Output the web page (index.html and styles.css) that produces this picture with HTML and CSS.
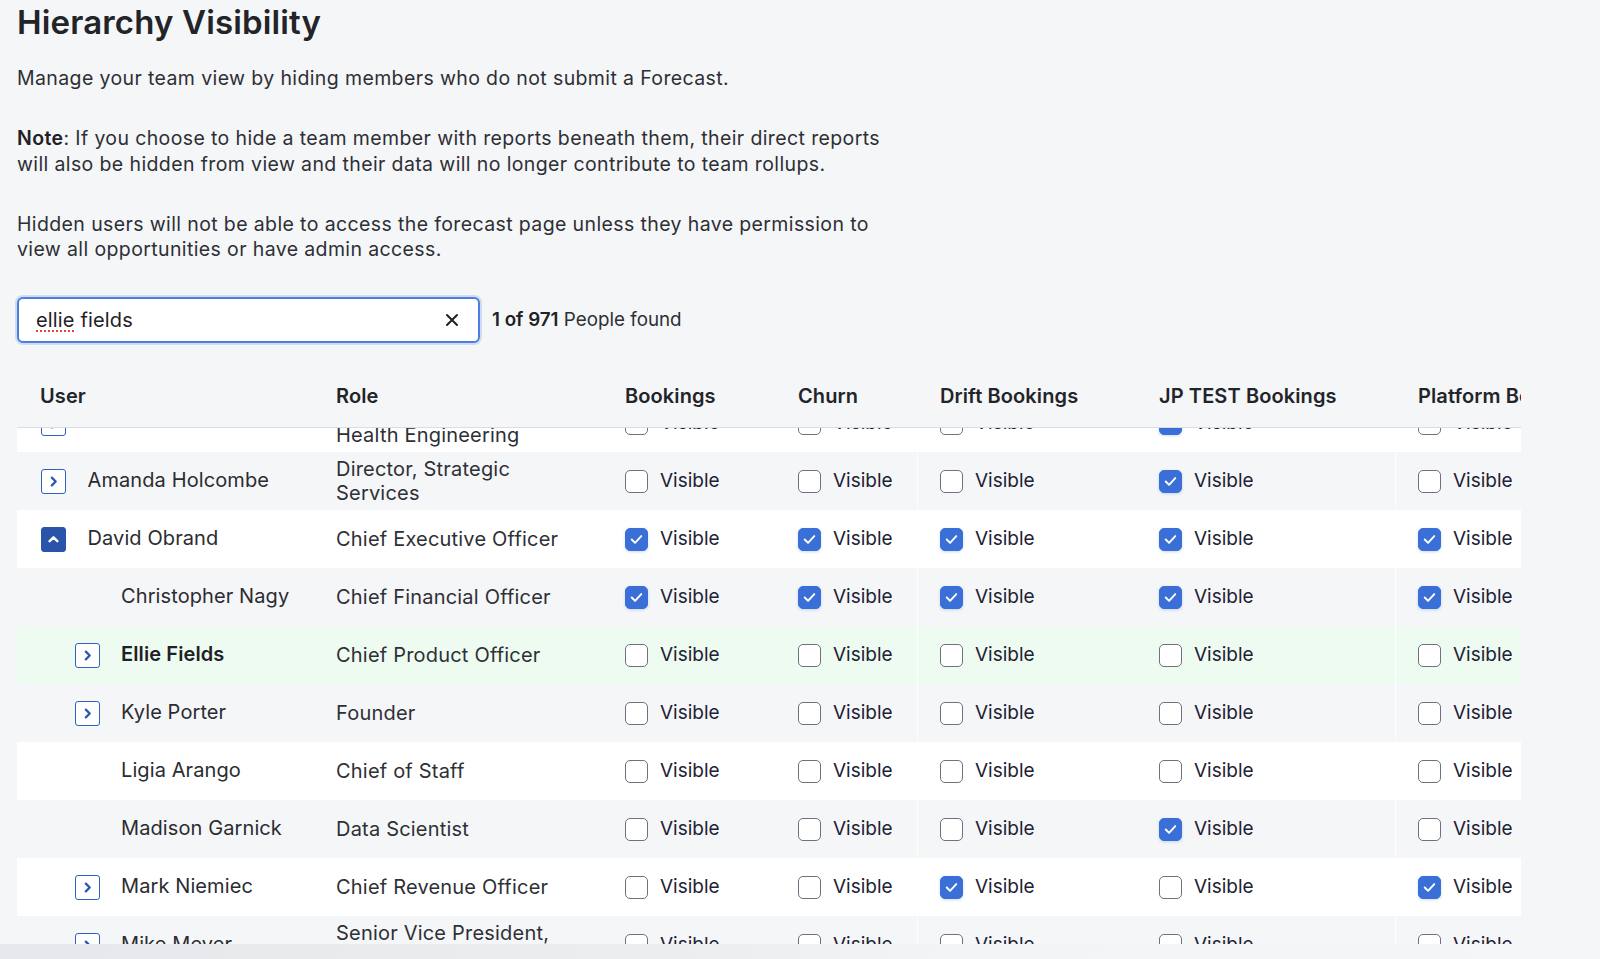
FILE: index.html
```html
<!DOCTYPE html>
<html lang="en">
<head>
<meta charset="utf-8">
<title>Hierarchy Visibility</title>
<link rel="stylesheet" href="styles.css">
</head>
<body>
<main class="page">
  <h1 class="title">Hierarchy Visibility</h1>
  <section class="intro">
    <p>Manage your team view by hiding members who do not submit a Forecast.</p>
    <p><strong>Note</strong>: If you choose to hide a team member with reports beneath them, their direct reports will also be hidden from view and their data will no longer contribute to team rollups.</p>
    <p>Hidden users will not be able to access the forecast page unless they have permission to view all opportunities or have admin access.</p>
  </section>

  <div class="search-row">
    <div class="search-box">
      <span class="search-text"><span class="misspelled">ellie</span> fields</span>
      <svg class="clear-icon" width="14" height="14" viewBox="0 0 14 14"><path d="M2 2 L12 12 M12 2 L2 12" stroke="#1f2126" stroke-width="2" stroke-linecap="round"/></svg>
    </div>
    <div class="search-count"><strong>1 of 971</strong> People found</div>
  </div>

  <div class="table">
    <div class="thead">
      <div class="th">User</div>
      <div class="th">Role</div>
      <div class="th">Bookings</div>
      <div class="th">Churn</div>
      <div class="th">Drift Bookings</div>
      <div class="th">JP TEST Bookings</div>
      <div class="th">Platform Bookings</div>
    </div>
    <div class="tbody">
      <div class="rows">
        <!-- row 0 (scrolled partly out of view) -->
        <div class="tr white">
          <div class="td user lvl0"><span class="exp"><svg viewBox="0 0 10 10"><path d="M3.5 1.5 L7 5 L3.5 8.5"/></svg></span><span class="name scrolled">Brian Hall</span></div>
          <div class="td role"><span class="role-text">Vice President, Platform Health Engineering</span></div>
          <div class="td chk"><span class="cb"></span><span class="cb-label">Visible</span></div>
          <div class="td chk"><span class="cb"></span><span class="cb-label">Visible</span></div>
          <div class="td chk div"><span class="cb"></span><span class="cb-label">Visible</span></div>
          <div class="td chk"><span class="cb on"><svg viewBox="0 0 22 22"><path d="M6 11.5 L9.5 15 L16 8"/></svg></span><span class="cb-label">Visible</span></div>
          <div class="td chk div"><span class="cb"></span><span class="cb-label">Visible</span></div>
        </div>
        <!-- Amanda -->
        <div class="tr grey">
          <div class="td user lvl0"><span class="exp"><svg viewBox="0 0 10 10"><path d="M3.5 1.5 L7 5 L3.5 8.5"/></svg></span><span class="name">Amanda Holcombe</span></div>
          <div class="td role"><span class="role-text">Director, Strategic Services</span></div>
          <div class="td chk"><span class="cb"></span><span class="cb-label">Visible</span></div>
          <div class="td chk"><span class="cb"></span><span class="cb-label">Visible</span></div>
          <div class="td chk div"><span class="cb"></span><span class="cb-label">Visible</span></div>
          <div class="td chk"><span class="cb on"><svg viewBox="0 0 22 22"><path d="M6 11.5 L9.5 15 L16 8"/></svg></span><span class="cb-label">Visible</span></div>
          <div class="td chk div"><span class="cb"></span><span class="cb-label">Visible</span></div>
        </div>
        <!-- David -->
        <div class="tr white">
          <div class="td user lvl0"><span class="exp open"><svg viewBox="0 0 10 10"><path d="M1.5 6.5 L5 3 L8.5 6.5"/></svg></span><span class="name">David Obrand</span></div>
          <div class="td role"><span class="role-text">Chief Executive Officer</span></div>
          <div class="td chk"><span class="cb on"><svg viewBox="0 0 22 22"><path d="M6 11.5 L9.5 15 L16 8"/></svg></span><span class="cb-label">Visible</span></div>
          <div class="td chk"><span class="cb on"><svg viewBox="0 0 22 22"><path d="M6 11.5 L9.5 15 L16 8"/></svg></span><span class="cb-label">Visible</span></div>
          <div class="td chk div"><span class="cb on"><svg viewBox="0 0 22 22"><path d="M6 11.5 L9.5 15 L16 8"/></svg></span><span class="cb-label">Visible</span></div>
          <div class="td chk"><span class="cb on"><svg viewBox="0 0 22 22"><path d="M6 11.5 L9.5 15 L16 8"/></svg></span><span class="cb-label">Visible</span></div>
          <div class="td chk div"><span class="cb on"><svg viewBox="0 0 22 22"><path d="M6 11.5 L9.5 15 L16 8"/></svg></span><span class="cb-label">Visible</span></div>
        </div>
        <!-- Christopher -->
        <div class="tr grey">
          <div class="td user lvl1"><span class="exp none"></span><span class="name">Christopher Nagy</span></div>
          <div class="td role"><span class="role-text">Chief Financial Officer</span></div>
          <div class="td chk"><span class="cb on"><svg viewBox="0 0 22 22"><path d="M6 11.5 L9.5 15 L16 8"/></svg></span><span class="cb-label">Visible</span></div>
          <div class="td chk"><span class="cb on"><svg viewBox="0 0 22 22"><path d="M6 11.5 L9.5 15 L16 8"/></svg></span><span class="cb-label">Visible</span></div>
          <div class="td chk div"><span class="cb on"><svg viewBox="0 0 22 22"><path d="M6 11.5 L9.5 15 L16 8"/></svg></span><span class="cb-label">Visible</span></div>
          <div class="td chk"><span class="cb on"><svg viewBox="0 0 22 22"><path d="M6 11.5 L9.5 15 L16 8"/></svg></span><span class="cb-label">Visible</span></div>
          <div class="td chk div"><span class="cb on"><svg viewBox="0 0 22 22"><path d="M6 11.5 L9.5 15 L16 8"/></svg></span><span class="cb-label">Visible</span></div>
        </div>
        <!-- Ellie -->
        <div class="tr hl">
          <div class="td user lvl1"><span class="exp"><svg viewBox="0 0 10 10"><path d="M3.5 1.5 L7 5 L3.5 8.5"/></svg></span><span class="name bold">Ellie Fields</span></div>
          <div class="td role"><span class="role-text">Chief Product Officer</span></div>
          <div class="td chk"><span class="cb"></span><span class="cb-label">Visible</span></div>
          <div class="td chk"><span class="cb"></span><span class="cb-label">Visible</span></div>
          <div class="td chk div"><span class="cb"></span><span class="cb-label">Visible</span></div>
          <div class="td chk"><span class="cb"></span><span class="cb-label">Visible</span></div>
          <div class="td chk div"><span class="cb"></span><span class="cb-label">Visible</span></div>
        </div>
        <!-- Kyle -->
        <div class="tr grey">
          <div class="td user lvl1"><span class="exp"><svg viewBox="0 0 10 10"><path d="M3.5 1.5 L7 5 L3.5 8.5"/></svg></span><span class="name">Kyle Porter</span></div>
          <div class="td role"><span class="role-text">Founder</span></div>
          <div class="td chk"><span class="cb"></span><span class="cb-label">Visible</span></div>
          <div class="td chk"><span class="cb"></span><span class="cb-label">Visible</span></div>
          <div class="td chk div"><span class="cb"></span><span class="cb-label">Visible</span></div>
          <div class="td chk"><span class="cb"></span><span class="cb-label">Visible</span></div>
          <div class="td chk div"><span class="cb"></span><span class="cb-label">Visible</span></div>
        </div>
        <!-- Ligia -->
        <div class="tr white">
          <div class="td user lvl1"><span class="exp none"></span><span class="name">Ligia Arango</span></div>
          <div class="td role"><span class="role-text">Chief of Staff</span></div>
          <div class="td chk"><span class="cb"></span><span class="cb-label">Visible</span></div>
          <div class="td chk"><span class="cb"></span><span class="cb-label">Visible</span></div>
          <div class="td chk div"><span class="cb"></span><span class="cb-label">Visible</span></div>
          <div class="td chk"><span class="cb"></span><span class="cb-label">Visible</span></div>
          <div class="td chk div"><span class="cb"></span><span class="cb-label">Visible</span></div>
        </div>
        <!-- Madison -->
        <div class="tr grey">
          <div class="td user lvl1"><span class="exp none"></span><span class="name">Madison Garnick</span></div>
          <div class="td role"><span class="role-text">Data Scientist</span></div>
          <div class="td chk"><span class="cb"></span><span class="cb-label">Visible</span></div>
          <div class="td chk"><span class="cb"></span><span class="cb-label">Visible</span></div>
          <div class="td chk div"><span class="cb"></span><span class="cb-label">Visible</span></div>
          <div class="td chk"><span class="cb on"><svg viewBox="0 0 22 22"><path d="M6 11.5 L9.5 15 L16 8"/></svg></span><span class="cb-label">Visible</span></div>
          <div class="td chk div"><span class="cb"></span><span class="cb-label">Visible</span></div>
        </div>
        <!-- Mark -->
        <div class="tr white">
          <div class="td user lvl1"><span class="exp"><svg viewBox="0 0 10 10"><path d="M3.5 1.5 L7 5 L3.5 8.5"/></svg></span><span class="name">Mark Niemiec</span></div>
          <div class="td role"><span class="role-text">Chief Revenue Officer</span></div>
          <div class="td chk"><span class="cb"></span><span class="cb-label">Visible</span></div>
          <div class="td chk"><span class="cb"></span><span class="cb-label">Visible</span></div>
          <div class="td chk div"><span class="cb on"><svg viewBox="0 0 22 22"><path d="M6 11.5 L9.5 15 L16 8"/></svg></span><span class="cb-label">Visible</span></div>
          <div class="td chk"><span class="cb"></span><span class="cb-label">Visible</span></div>
          <div class="td chk div"><span class="cb on"><svg viewBox="0 0 22 22"><path d="M6 11.5 L9.5 15 L16 8"/></svg></span><span class="cb-label">Visible</span></div>
        </div>
        <!-- Mike -->
        <div class="tr grey">
          <div class="td user lvl1"><span class="exp"><svg viewBox="0 0 10 10"><path d="M3.5 1.5 L7 5 L3.5 8.5"/></svg></span><span class="name">Mike Meyer</span></div>
          <div class="td role"><span class="role-text">Senior Vice President, Engineering</span></div>
          <div class="td chk"><span class="cb"></span><span class="cb-label">Visible</span></div>
          <div class="td chk"><span class="cb"></span><span class="cb-label">Visible</span></div>
          <div class="td chk div"><span class="cb"></span><span class="cb-label">Visible</span></div>
          <div class="td chk"><span class="cb"></span><span class="cb-label">Visible</span></div>
          <div class="td chk div"><span class="cb"></span><span class="cb-label">Visible</span></div>
        </div>
      </div>
    </div>
  </div>
  <div class="scroll-shadow"></div>
</main>
</body>
</html>
```

FILE: styles.css
```css
* { box-sizing: border-box; }

html, body {
  margin: 0;
  padding: 0;
}

body {
  width: 1600px;
  height: 959px;
  overflow: hidden;
  background: #f5f6f8;
  font-family: Inter, "Noto Sans", sans-serif;
  color: #2b2d33;
}

.page {
  padding: 2px 0 0 17px;
}

.title {
  margin: 0;
  font-size: 33px;
  line-height: 40px;
  font-weight: 600;
  color: #222428;
  letter-spacing: 0.15px;
}

.intro {
  margin-top: 24px;
  width: 875px;
}

.intro p {
  margin: 0 0 34.5px;
  font-size: 19.5px;
  line-height: 25.5px;
  letter-spacing: 0.38px;
  color: #2d2f35;
}

.intro strong {
  font-weight: 600;
  color: #1f2126;
}

/* search */
.search-row {
  display: flex;
  align-items: center;
  gap: 12px;
  margin-top: -0.5px;
}

.search-box {
  width: 463px;
  height: 46px;
  background: #ffffff;
  border: 2px solid #4a7fe0;
  border-radius: 6px;
  box-shadow: 0 0 0 2px rgba(74, 127, 224, 0.22);
  display: flex;
  align-items: center;
  justify-content: space-between;
  padding: 0 19px 0 17px;
}

.search-text {
  font-size: 20px;
  letter-spacing: 0.15px;
  color: #1f2126;
}

.misspelled {
  text-decoration: underline dotted #e0453f;
  text-decoration-thickness: 2px;
  text-underline-offset: 4px;
}

.clear-icon {
  display: block;
}

.search-count {
  font-size: 18.8px;
  color: #2d2f35;
}

.search-count strong {
  font-weight: 600;
  color: #1f2126;
}

/* table */
.table {
  margin-top: 41.5px;
  width: 1504px;
  overflow: hidden;
}

.thead,
.tr {
  display: grid;
  grid-template-columns: 296px 289px 173px 142px 219px 259px 220px;
}

.thead {
  border-bottom: 1px solid #dcdde1;
  padding-bottom: 19px;
}

.th {
  padding-left: 23px;
  font-size: 20px;
  line-height: 24px;
  font-weight: 600;
  letter-spacing: 0.1px;
  color: #22242a;
  white-space: nowrap;
}

.tbody {
  height: 516px;
  overflow: hidden;
}

.rows {
  margin-top: -34px;
}

.tr {
  height: 58px;
  align-items: center;
}

.tr.white { background: #ffffff; }
.tr.grey { background: #f5f6f8; }
.tr.hl { background: #edfbf1; }

.tr.grey .td.div,
.tr.hl .td.div {
  box-shadow: inset 1px 0 0 rgba(255, 255, 255, 0.75);
}

.td {
  height: 100%;
  display: flex;
  align-items: center;
  padding-left: 23px;
  font-size: 20px;
  line-height: 24px;
  color: #2e3036;
}

.td.user {
  padding-left: 24px;
}

.td.user.lvl1 {
  padding-left: 57.5px;
}

.exp {
  flex: none;
  width: 25px;
  height: 25px;
  border: 1.5px solid #2f62c0;
  border-radius: 3px;
  display: flex;
  align-items: center;
  justify-content: center;
  margin-right: 21.5px;
  margin-top: 1px;
  background: #ffffff;
}

.exp svg {
  width: 11px;
  height: 11px;
  fill: none;
  stroke: #2a58b5;
  stroke-width: 2.1;
  stroke-linecap: round;
  stroke-linejoin: round;
}

.exp.open {
  background: #2a54a9;
  border-color: #2a54a9;
}

.exp.open svg {
  stroke: #ffffff;
  stroke-width: 2.2;
}

.exp.none {
  border: none;
  background: transparent;
}

.name {
  margin-top: -3px;
  white-space: nowrap;
  color: #2a2c32;
  letter-spacing: 0.1px;
}

.name.scrolled {
  margin-top: -14px;
}

.name.bold {
  font-weight: 600;
  color: #1f2126;
}

.role-text {
  max-width: 240px;
  letter-spacing: 0.2px;
}

.cb {
  flex: none;
  width: 23px;
  height: 23px;
  border: 1.5px solid #6e717e;
  border-radius: 5px;
  background: #ffffff;
  display: flex;
  align-items: center;
  justify-content: center;
}

.cb.on {
  background: #3a6fd8;
  border-color: #3a6fd8;
  box-shadow: 0 1px 3px rgba(58, 111, 216, 0.25);
}

.cb svg {
  width: 22px;
  height: 22px;
  fill: none;
  stroke: #ffffff;
  stroke-width: 2;
  stroke-linecap: round;
  stroke-linejoin: round;
}

.cb-label {
  margin-left: 12px;
  font-size: 19px;
  color: #1e2234;
}

.scroll-shadow {
  margin-left: -17px;
  width: 1600px;
  height: 15px;
  background: linear-gradient(to right, #e6e7ea 0%, #eceef0 45%, #f3f4f6 60%, #f5f6f8 100%);
}
```
